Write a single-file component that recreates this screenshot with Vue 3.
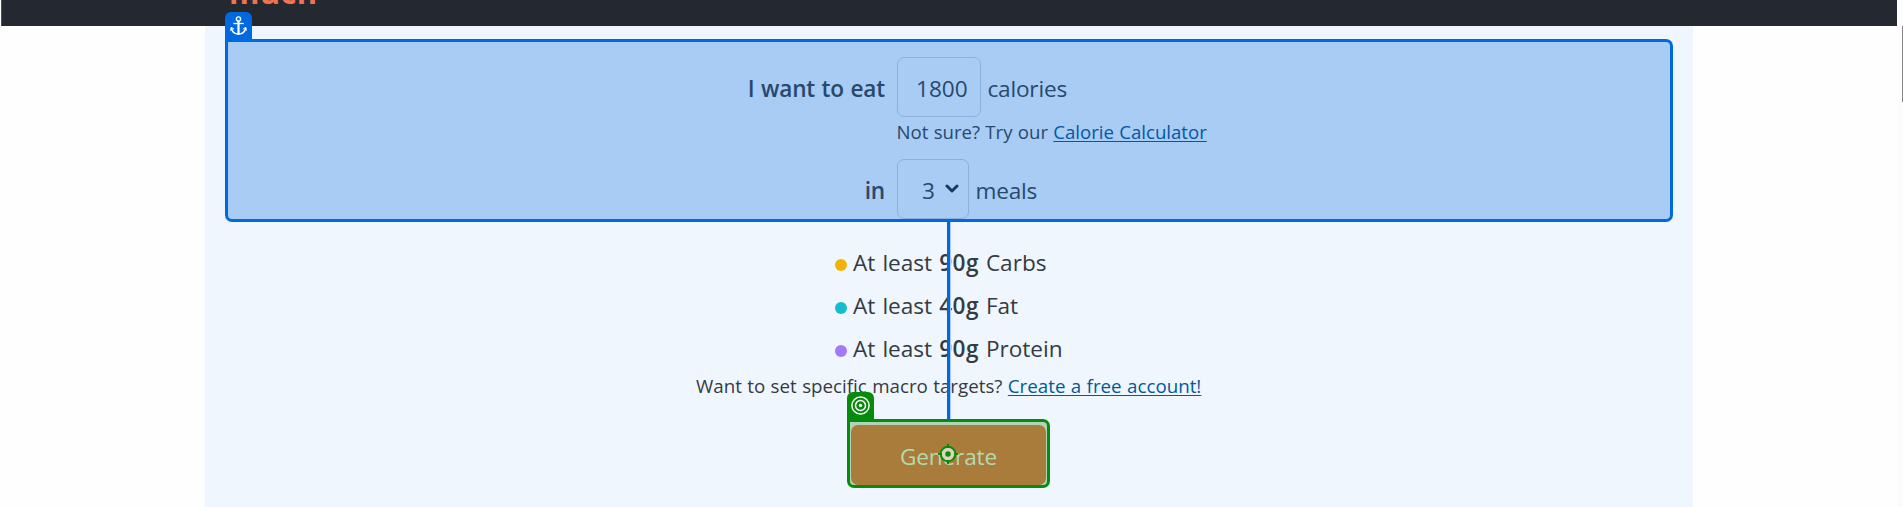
<script setup>
const macros = [
  { name: 'Carbs', amount: '90g', tone: 'carbs' },
  { name: 'Fat', amount: '40g', tone: 'fat' },
  { name: 'Protein', amount: '90g', tone: 'protein' },
]
</script>

<template>
  <div class="page">
    <header class="topbar"><span class="brand">much</span></header>
    <main class="panel">
      <section class="planner">
        <span class="tab anchor-tab">
          <svg width="27" height="27" viewBox="0 0 27 27" fill="none" stroke="#fff">
            <circle cx="13.5" cy="7" r="2.1" stroke-width="1.4" />
            <path d="M13.5 9v13" stroke-width="2.2" />
            <path d="M8.3 11.5h10.4" stroke-width="1.3" />
            <path d="M6.5 16.2c.4 3.5 3.2 5.8 7 6 3.8-.2 6.6-2.5 7-6" stroke-width="1.5" />
            <path d="M5.6 18.7l.6-3.4 2.9 1.9M21.4 18.7l-.6-3.4-2.9 1.9" stroke-width="1" />
          </svg>
        </span>
        <div class="row">
          <label class="lead"><span>I want to eat</span></label>
          <span class="field calories"><span>1800</span></span>
          <span class="unit"><span>calories</span></span>
        </div>
        <p class="hint">Not sure? Try our <a>Calorie Calculator</a></p>
        <div class="row">
          <label class="lead"><span>in</span></label>
          <span class="field meals"><span>3</span>
            <svg width="14" height="10" viewBox="0 0 14 10"><path d="M2 2l5 5 5-5" fill="none" stroke="#173a65" stroke-width="3" stroke-linecap="round" stroke-linejoin="round" /></svg>
          </span>
          <span class="unit"><span>meals</span></span>
        </div>
      </section>

      <ul class="macros">
        <li v-for="m in macros" :key="m.name">
          <i class="dot" :class="m.tone"></i>
          <span class="macro-text">At least <b>{{ m.amount }}</b> {{ m.name }}</span>
        </li>
      </ul>
      <p class="account">Want to set specific macro targets? <a>Create a free account!</a></p>

      <div class="action">
        <span class="connector"></span>
        <span class="tab target-tab">
          <svg width="27" height="27" viewBox="0 0 27 27" fill="none" stroke="#fff" stroke-width="1.5">
            <circle cx="13.5" cy="13.5" r="8.6" />
            <circle cx="13.5" cy="13.5" r="5" />
            <circle cx="13.5" cy="13.5" r="1.7" fill="#fff" stroke="none" />
          </svg>
        </span>
        <button class="generate">Generate</button>
        <svg class="crosshair" width="20" height="20" viewBox="0 0 20 20">
          <circle cx="10" cy="10" r="7.3" fill="#e3d2bb" stroke="#078b0c" stroke-width="2" />
          <circle cx="10" cy="10" r="2.7" fill="#078b0c" />
          <path d="M10 0v4M10 16v4M0 10h4M16 10h4" stroke="#078b0c" stroke-width="2" />
        </svg>
      </div>
    </main>
    <span class="scroll-track"><span class="scroll-thumb"></span></span>
  </div>
</template>

<style>
body { overflow: hidden; background: #fefefe; }
</style>

<style scoped>
.page {
  position: relative;
  height: 507px;
  overflow: hidden;
  background: #fefefe;
  color: #343b42;
  font: 22.6px/30px "Open Sans", "Noto Sans", sans-serif;
  word-spacing: 0.7px;
}
.topbar {
  box-sizing: border-box;
  height: 26px;
  margin: 0 6px 0 1px;
  padding-left: 227px;
  background: #242830;
  border-left: 1px solid #4c5055;
  overflow: hidden;
}
.brand {
  display: block;
  margin-top: -30px;
  color: #ef7350;
  font-size: 31px;
  font-weight: 700;
  line-height: 44px;
  letter-spacing: 0.3px;
}
.panel {
  box-sizing: border-box;
  width: 1488px;
  height: 481px;
  margin-left: 205px;
  padding: 13px 20px 0;
  background: #eff6fe;
}
.planner {
  position: relative;
  box-sizing: border-box;
  height: 183px;
  padding-top: 15px;
  border: 3px solid #0069e0;
  border-radius: 0 7px 7px 7px;
  background: #a9ccf4;
  color: #28486e;
}
.tab {
  position: absolute;
  left: -3px;
  top: -30px;
  width: 27px;
  height: 27px;
  border-radius: 6px 6px 0 0;
}
.tab svg { display: block; }
.anchor-tab { background: #0069e0; }
.target-tab { background: #078b0c; }
.row { display: flex; height: 60px; align-items: center; }
.row span > span, .lead > span { display: block; padding-top: 3px; }
.lead { width: 657px; margin-right: 12px; text-align: right; font-weight: 600; letter-spacing: -0.15px; }
.field {
  display: flex;
  box-sizing: border-box;
  height: 60px;
  align-items: center;
  border: 1px solid #8bb0dc;
  border-radius: 7px;
}
.calories { width: 84px; padding-left: 18px; }
.meals { width: 72px; padding-left: 24px; gap: 10px; }
.unit { margin-left: 6.5px; letter-spacing: -0.2px; }
.hint, .account { margin: 0; font-size: 18.75px; word-spacing: 0.5px; }
.hint { height: 42px; padding-left: 668.5px; font-size: 18.6px; }
a { color: #00599b; text-decoration: underline; text-decoration-thickness: 1px; text-underline-offset: 2px; }
.hint a { color: #0058a7; }
.macros { margin: 20px 0 0; padding: 0 0 0 610px; list-style: none; }
.macros li { display: flex; height: 43px; align-items: center; gap: 6px; }
.macro-text { padding-bottom: 1px; word-spacing: 1.2px; }
.macros b { font-weight: 600; letter-spacing: 0.4px; }
.dot { width: 12px; height: 12px; margin-top: 3px; border-radius: 50%; }
.carbs { background: #f2b307; }
.fat { background: #14bdcc; }
.protein { background: #a478fb; }
.account { height: 48px; padding-left: 471px; }
.action {
  position: relative;
  box-sizing: border-box;
  width: 203px;
  height: 69px;
  margin-left: 622px;
  padding: 3px 1px 0;
  border: 3px solid #078b0c;
  border-radius: 0 7px 7px 7px;
  background: #afd4b7;
}
.connector {
  position: absolute;
  left: 97px;
  top: -200px;
  width: 3px;
  height: 197px;
  background: #0069e0;
  box-shadow: 1px 0 #a9ccf4;
}
.generate {
  display: block;
  width: 195px;
  height: 60px;
  padding: 4px 0 0;
  border: 0;
  border-radius: 7px;
  background: #a97c3b;
  color: #b3dbb0;
  font: inherit;
  letter-spacing: -0.15px;
}
.crosshair { position: absolute; left: 88px; top: 22px; }
.scroll-track { position: absolute; right: 0; top: 0; width: 6px; height: 100%; background: #fcfcfc; }
.scroll-thumb { position: absolute; right: 0; top: 26px; width: 1px; height: 76px; background: #888; }
</style>
